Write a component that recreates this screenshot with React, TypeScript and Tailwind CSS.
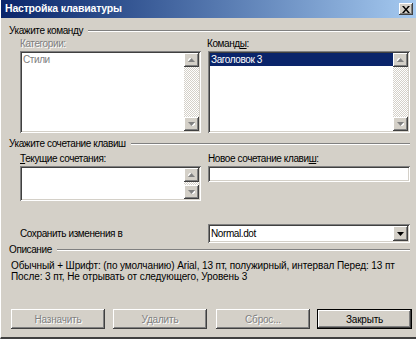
import type { ReactNode } from "react";

const raised =
  "shadow-[inset_-1px_-1px_0_#404040,inset_1px_1px_0_#ffffff,inset_-2px_-2px_0_#808080,inset_2px_2px_0_#d4d0c8]";
const sunken =
  "shadow-[inset_1px_1px_0_#808080,inset_-1px_-1px_0_#ffffff,inset_2px_2px_0_#404040,inset_-2px_-2px_0_#d4d0c8]";
const disabledText = "text-[#808080] [text-shadow:1px_1px_0_#ffffff]";

function GroupHeader({ label }: { label: string }) {
  return (
    <div className="flex h-[13px] items-center pl-[8px] pr-[6px]">
      <span className="leading-[13px]">{label}</span>
      <div className="ml-[5px] h-[2px] flex-1 border-t border-b border-t-[#808080] border-b-white" />
    </div>
  );
}

function Arrow({ down, dark }: { down?: boolean; dark?: boolean }) {
  return (
    <svg width="7" height="4" viewBox="0 0 7 4" className={down ? "" : "rotate-180"}>
      {!dark && <polygon points="1,1 8,1 4.5,5" fill="#ffffff" />}
      <polygon points="0,0 7,0 3.5,4" fill={dark ? "#000000" : "#808080"} />
    </svg>
  );
}

function ScrollBar() {
  return (
    <div className="flex w-[15px] flex-col">
      <div className={`flex h-[14px] items-center justify-center bg-[#d4d0c8] ${raised}`}>
        <Arrow />
      </div>
      <div className="flex-1 bg-[repeating-conic-gradient(#d4d0c8_0_25%,#ffffff_0_50%)] bg-[length:2px_2px]" />
      <div className={`flex h-[14px] items-center justify-center bg-[#d4d0c8] ${raised}`}>
        <Arrow down />
      </div>
    </div>
  );
}

function ListBox({ height, children }: { height: string; children?: ReactNode }) {
  return (
    <div className={`flex bg-white p-[2px] ${height} ${sunken}`}>
      <div className="flex-1">{children}</div>
      <ScrollBar />
    </div>
  );
}

function Button({ label, disabled, isDefault, ml }: { label: string; disabled?: boolean; isDefault?: boolean; ml: string }) {
  return (
    <div className={`${ml} ${label === "Закрыть" ? "w-[95px]" : "w-[94px]"} h-[20px] ${isDefault ? "border border-black" : ""}`}>
      <div className={`flex h-full items-center justify-center bg-[#d4d0c8] tracking-[-0.2px] ${raised} ${disabled ? disabledText : ""}`}>
        {label}
      </div>
    </div>
  );
}

export default function App() {
  return (
    <div className="flex h-[339px] w-[416px] flex-col overflow-hidden border-b-2 border-b-[#404040] border-l border-l-white bg-[#d4d0c8] font-['Liberation_Sans',sans-serif] text-[10px] tracking-[-0.4px] text-black">
      {/* Title bar */}
      <div className="flex h-[18px] shrink-0 items-center bg-linear-to-r from-[#0a246a] to-[#a6caf0] pl-[4px] pr-[3px]">
        <span className="flex-1 text-[10.5px] font-bold tracking-[-0.2px] text-white">Настройка клавиатуры</span>
        <div className={`flex h-[12px] w-[14px] items-center justify-center bg-[#d4d0c8] ${raised}`}>
          <svg width="8" height="7" viewBox="0 0 8 7">
            <path d="M0 0h2l2 2.5L6 0h2L5 3.5 8 7H6L4 4.5 2 7H0l3-3.5z" fill="#000" />
          </svg>
        </div>
      </div>

      {/* Укажите команду */}
      <div className="mt-[6px]">
        <GroupHeader label="Укажите команду" />
      </div>
      <div className="flex pl-[19px]">
        <div className="w-[181px]">
          <div className={`h-[13px] leading-[13px] ${disabledText}`}>Категории:</div>
          <div className="mt-[1px]">
            <ListBox height="h-[82px]">
              <div className="pl-[1px] leading-[13px] text-[#808080]">Стили</div>
            </ListBox>
          </div>
        </div>
        <div className="ml-[7px] w-[202px]">
          <div className="-ml-[1px] h-[13px] leading-[13px]">
            Команд<span className="underline">ы</span>:
          </div>
          <div className="mt-[1px]">
            <ListBox height="h-[82px]">
              <div className="h-[13px] bg-[#0a246a] pl-[1px] leading-[13px] text-white">Заголовок 3</div>
            </ListBox>
          </div>
        </div>
      </div>

      {/* Укажите сочетание клавиш */}
      <div className="mt-[4px]">
        <GroupHeader label="Укажите сочетание клавиш" />
      </div>
      <div className="mt-[2px] flex pl-[19px]">
        <div className="w-[181px]">
          <div className="h-[13px] leading-[13px]">
            <span className="underline">Т</span>екущие сочетания:
          </div>
          <div className="mt-[1px]">
            <ListBox height="h-[35px]" />
          </div>
        </div>
        <div className="ml-[7px] w-[202px]">
          <div className="h-[13px] leading-[13px]">
            Новое сочетание клави<span className="underline">ш</span>:
          </div>
          <div className={`mt-[1px] h-[16px] bg-white ${sunken}`} />
        </div>
      </div>

      {/* Сохранить изменения в */}
      <div className="mt-[23px] flex items-center pl-[19px]">
        <div className="w-[181px] leading-[13px]">Сохранить изменения в</div>
        <div className={`ml-[7px] flex h-[19px] w-[202px] items-center bg-white p-[2px] ${sunken}`}>
          <span className="flex-1 pl-[1px] leading-[13px]">Normal.dot</span>
          <div className={`flex h-[15px] w-[15px] items-center justify-center bg-[#d4d0c8] ${raised}`}>
            <Arrow down dark />
          </div>
        </div>
      </div>

      {/* Описание */}
      <GroupHeader label="Описание" />
      <div className="mt-[4px] pl-[10px] leading-[11px] tracking-[-0.1px]">
        <div>Обычный + Шрифт: (по умолчанию) Arial, 13 пт, полужирный, интервал Перед: 13 пт</div>
        <div>После: 3 пт, Не отрывать от следующего, Уровень 3</div>
      </div>

      {/* Buttons */}
      <div className="mb-[8px] mt-auto flex pl-[10px]">
        <Button label="Назначить" disabled ml="" />
        <Button label="Удалить" disabled ml="ml-[8px]" />
        <Button label="Сброс..." disabled ml="ml-[9px]" />
        <Button label="Закрыть" isDefault ml="ml-[7px]" />
      </div>
    </div>
  );
}
